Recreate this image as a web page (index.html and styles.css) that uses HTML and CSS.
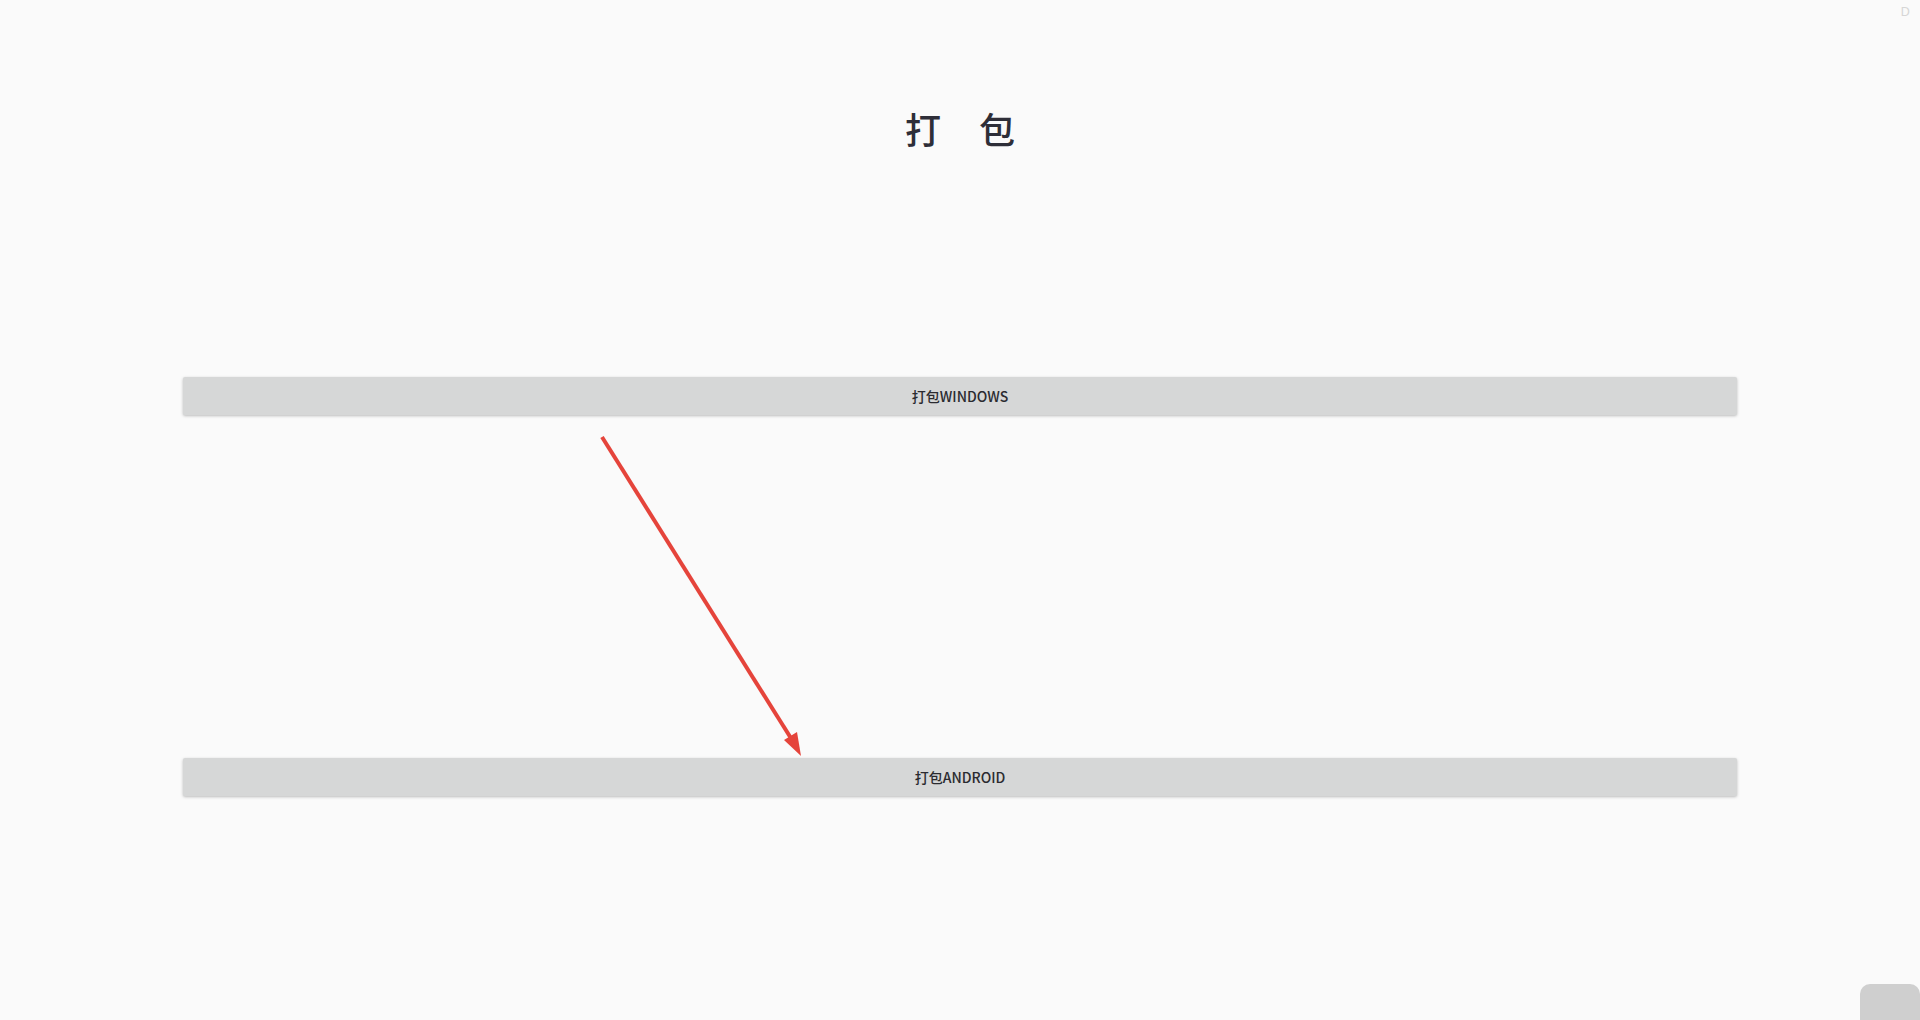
FILE: index.html
```html
<!DOCTYPE html>
<html lang="zh">
<head>
<meta charset="utf-8">
<title>打包</title>
<link rel="stylesheet" href="styles.css">
</head>
<body>
<div class="page">
  <h1 class="title"><span>打</span><span>包</span></h1>
  <div class="actions">
    <button class="pack-btn">打包WINDOWS</button>
    <button class="pack-btn">打包ANDROID</button>
  </div>
</div>
<span class="corner-letter">D</span>
<div class="corner-box"></div>
<svg class="arrow" width="1920" height="1020" viewBox="0 0 1920 1020">
  <line x1="602" y1="437" x2="794" y2="743" stroke="#e5443b" stroke-width="4" stroke-linecap="butt"/>
  <polygon points="801,756 784,740 797,732" fill="#e5443b"/>
</svg>
</body>
</html>
```
FILE: styles.css
```css
html, body {
  margin: 0;
  padding: 0;
  background: #fafafa;
  height: 100%;
}
body {
  font-family: "Noto Sans CJK SC", "Noto Sans", sans-serif;
  color: #2e2e36;
  overflow: hidden;
}
.page {
  display: flex;
  flex-direction: column;
  align-items: center;
  padding: 0 183px;
}
.title {
  display: flex;
  gap: 38px;
  margin: 102px 0 0;
  font-size: 36px;
  font-weight: 500;
  line-height: 52px;
  color: #2e2e38;
}
.actions {
  align-self: stretch;
  display: flex;
  flex-direction: column;
  gap: 343px;
  margin-top: 223px;
}
.pack-btn {
  height: 38px;
  border: none;
  border-radius: 2px;
  background: #d6d7d7;
  box-shadow: 0 1px 3px rgba(0,0,0,0.25);
  font-family: "Noto Sans CJK SC", "Noto Sans", sans-serif;
  font-size: 14px;
  font-weight: 500;
  color: #2b2b30;
  padding: 0;
}
.corner-letter {
  position: absolute;
  top: 2px;
  right: 10px;
  font-family: "Noto Sans", sans-serif;
  font-size: 13px;
  color: #d6d6d6;
}
.corner-box {
  position: fixed;
  right: 0;
  bottom: 0;
  width: 60px;
  height: 36px;
  border-radius: 10px 10px 0 0;
  background: #cfcfcf;
}
.arrow {
  position: absolute;
  top: 0;
  left: 0;
  pointer-events: none;
}
```
